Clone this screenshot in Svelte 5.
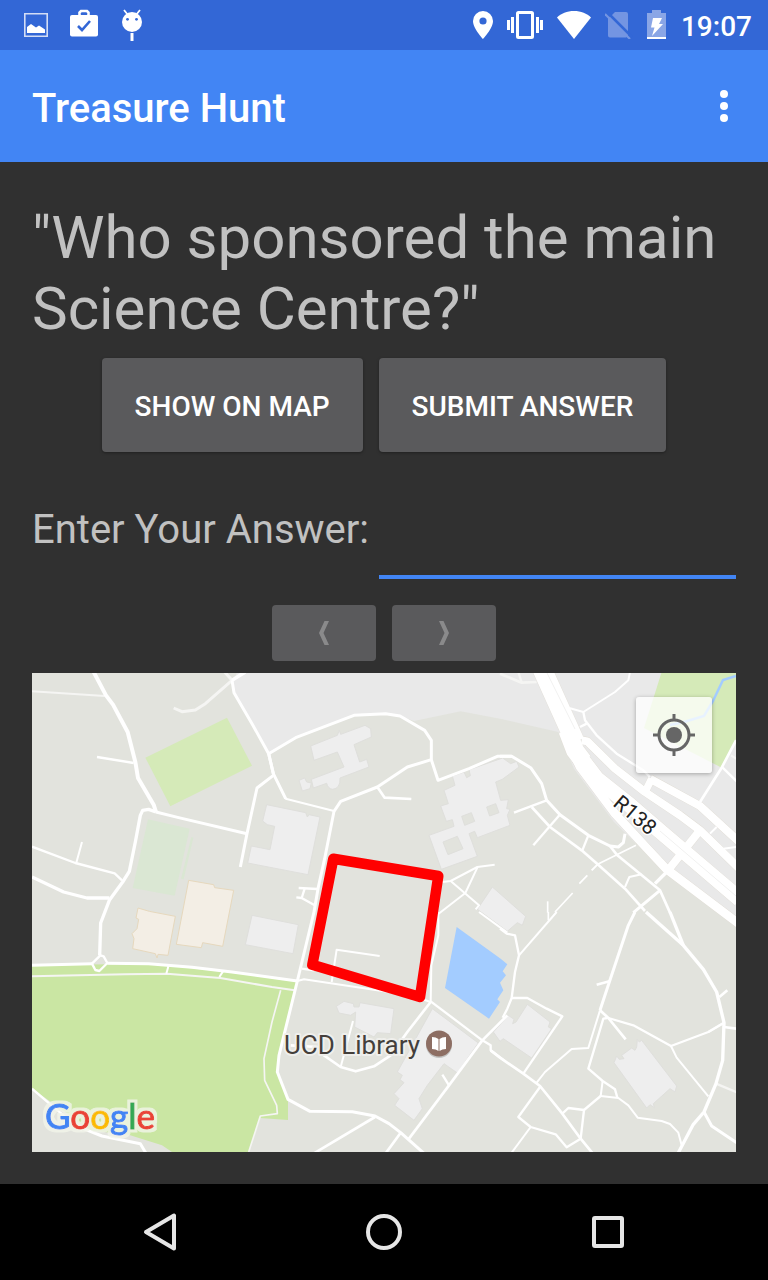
<script>
  let answer = $state('');

  // Map geometry is stored per tile, three units to the pixel.
  // Each tile has its origin in map pixels.
  const tiles = [
    {
      x: 0, y: -1,
      areas: [
        ['#d5eab8', '340,257 585,137 660,281 415,403'],
        ['#dae7d3', '348,442 473,470 428,671 302,648'],
        ['#dae7d3', '478,495 484,497 455,622 447,620']
      ],
      soft: [
        [6, '0,58 218,72'],
        [9, '425,108 450,119 490,114 520,95 600,25 635,0'],
        [9, '578,0 600,25']
      ],
      roads: [
        [10, '600,25 640,0'],
        [12, '185,0 222,70 243,98 287,180 310,270 318,318 365,398 372,420'],
        [7, '195,255 305,273'],
        [9, '600,25 606,62 660,155 710,245 724,305'],
        [9, '724,310 675,348 645,485 625,585'],
        [9, '372,420 440,437 645,485'],
        [10, '372,420 350,412 332,415 325,430 310,510 292,598 272,630 232,685 206,753 203,850'],
        [7, '0,524 130,573 248,604 270,625'],
        [6, '133,572 150,510'],
        [10, '0,615 95,660 165,678 232,678']
      ],
      tan: [], buildings: []
    },
    {
      x: 232, y: -1,
      areas: [
        ['#e9e9e9', '-80,0 -96,30 -86,65 -36,155 14,245 95,197 270,130 365,125 408,132 450,147 590,118 716,142 883,180 930,290 1050,450 1208,605 1416,750 1416,0']
      ],
      soft: [],
      roads: [
        [6, '28,305 65,380 210,417'],
        [9, '14,245 28,305 65,380'],
        [9, '14,245 95,197 270,130 365,125 408,132 482,175 502,205 502,263 522,325 615,290 700,253 743,253'],
        [9, '502,263 430,285 340,345 230,388 210,418 182,560 162,650 150,720'],
        [8, '340,345 362,377 442,381'],
        [7, '104,648 160,651'],
        [7, '122,650 113,678'],
        [7, '97,676 113,678 152,700'],
        [6, '535,630 560,627 640,585 692,578'],
        [6, '560,627 602,663 645,700 635,712'],
        [6, '640,587 604,663 520,728']
      ],
      tan: [],
      buildings: [
        'M140,222 220,190 226,175 230,187 303,160 320,170 322,195 270,218 287,270 308,262 315,285 228,318 Q230,350 205,352 Q192,350 188,334 L148,348 142,322 240,285 220,240 150,265Z',
        'M105,325 122,318 128,330 142,333 138,350 115,357Z',
        'M8,398 125,422 130,435 135,428 168,435 132,608 -49,573 -38,522 18,533 32,463 10,458 -4,447Z',
        'M565,312 600,300 608,317 619,311 615,293 716,258 740,275 758,268 765,285 715,322 695,330 710,385 733,383 728,410 738,412 730,430 738,460 640,497 632,478 615,485 640,553 532,592 495,490 570,463 565,443 547,448 530,402 553,395 540,355 573,340Z M593,433 622,422 632,448 602,460Z M668,405 695,395 705,422 677,432Z M537,510 580,493 597,530 552,548Z',
        'M685,645 785,733 775,760 760,752 730,778 640,712Z'
      ]
    },
    {
      x: 468, y: -1,
      areas: [['#d5eab8', '485,0 708,0 708,200 665,287 432,168']],
      soft: [
        [8, '0,5 65,32 110,30'],
        [7, '55,0 65,32'],
        [6, '693,250 712,262']
      ],
      roads: [
        [6, '390,0 385,25 345,60 250,120 205,107'],
        [7, '250,120 255,145 290,190 350,245 430,295 450,315'],
        [7, '240,165 260,155'],
        [8, '600,390 665,287 708,205'],
        [7, '668,287 710,328'],
        [6, '650,465 630,485'],
        [6, '670,530 708,525'],
        [9, '0,253 35,253 92,287 125,335 140,385 180,428 265,490 330,522 355,525 370,512 375,485'],
        [8, '95,405 150,465 245,535 293,577 375,650 435,717'],
        [7, '42,422 140,385'],
        [7, '178,430 100,520'],
        [7, '265,490 247,535'],
        [8, '330,522 352,550 420,605 480,655 510,722'],
        [5, '293,577 408,520'],
        [6, '275,595 293,577'],
        [5, '262,610 238,635'],
        [5, '218,663 165,720'],
        [5, '143,688 143,722'],
        [9, '480,655 400,722'],
        [6, '375,645 388,615 425,607'],
        [10, '465,635 500,600'],
        [58, '126,-10 205,165 225,210'],
        [54, '202,175 225,235 250,268'],
        [26, '212,225 240,285 345,425 430,517 500,592 720,758'],
        [46, '225,235 290,320 390,400 490,486 720,682'],
        [24, '245,205 262,208 345,290 435,360 540,430 600,475 720,592'],
        [24, '450,320 600,402 720,512'],
        [22, '455,320 435,360'],
        [24, '500,600 600,475']
      ],
      tan: [], buildings: []
    },
    {
      x: 0, y: 239,
      areas: [
        ['#cae6a3', '0,160 350,155 720,195 796,208 741,430 736,480 768,560 768,624 685,618 650,720 420,720 390,700 290,668 170,655 100,600 0,530']
      ],
      soft: [
        [6, '0,193 280,187 405,185 565,198 720,225 788,235'],
        [5, '746,235 720,330 696,440 698,505 734,580 736,605 685,612 650,720']
      ],
      roads: [
        [7, '205,130 215,133 226,153 202,177 190,174 180,155 205,130'],
        [9, '0,160 180,155'],
        [9, '226,154 350,155 480,166 600,180 796,207'],
        [6, '410,160 403,185'],
        [6, '573,178 562,195'],
        [7, '0,530 70,590 150,655'],
        [9, '130,640 210,672 325,695 342,724']
      ],
      tan: [
        'M470,-95 545,-82 548,-73 605,-65 572,103 512,92 508,107 433,97Z',
        'M318,-12 352,-2 430,13 408,130 378,127 375,138 370,125 302,110 306,80 300,65 315,50 320,22 312,18Z'
      ],
      buildings: ['M660,10 799,38 783,125 640,98Z']
    },
    {
      x: 232, y: 239,
      areas: [
        ['#a3ccff', '578,45 710,140 730,157 716,178 726,190 708,212 718,235 700,262 708,270 675,320 543,228']
      ],
      soft: [],
      roads: [
        [9, '150,0 100,207 45,430 40,480 72,562 138,598 265,599 333,612 375,635 410,662 480,724'],
        [6, '523,0 523,70 502,160 500,270'],
        [7, '500,268 655,385 680,400 680,415 720,445'],
        [6, '645,0 730,62'],
        [8, '500,270 430,360 380,430 330,463 275,478 230,465 180,430 160,405 80,400'],
        [6, '267,327 230,465'],
        [6, '100,207 120,202 440,250 500,270'],
        [7, '113,170 150,175'],
        [6, '203,210 218,113 347,132'],
        [8, '730,310 655,385 555,520 435,680'],
        [7, '535,488 555,520'],
        [8, '410,662 365,724'],
        [8, '150,724 333,615']
      ],
      tan: [],
      buildings: [
        'M217,283 240,268 268,275 270,285 285,285 288,272 390,290 380,365 340,362 330,375 272,345 275,300 260,310 225,303Z',
        'M505,290 643,393 580,483 540,455 490,520 465,560 475,590 450,625 392,580 405,560 390,545 420,512 408,503 415,490 400,480Z'
      ]
    },
    {
      x: 468, y: 239,
      areas: [],
      soft: [
        [7, '625,360 672,332'],
        [7, '648,515 712,542']
      ],
      roads: [
        [7, '8,317 22,290 35,258 45,180 57,130 45,70 20,65 0,50'],
        [7, '35,258 82,258 140,290 187,313 70,485'],
        [6, '57,130 170,0'],
        [5, '145,0 145,25'],
        [8, '-28,415 0,437 70,485 120,522 187,605 242,680 278,724'],
        [6, '110,512 135,480 215,411 265,408 300,295'],
        [9, '405,0 385,40 328,210 300,295'],
        [8, '290,218 328,208'],
        [8, '300,295 325,318 377,382'],
        [7, '325,318 400,340 513,402 625,360 672,332'],
        [7, '322,318 310,320 265,470 308,507 345,532 352,557'],
        [6, '513,402 530,437 625,553'],
        [6, '308,507 302,552 355,558 385,580 413,617 485,627 510,636 535,662 545,700'],
        [7, '302,552 252,594 242,680 200,706 167,667 92,645 55,615 120,525'],
        [7, '187,605 205,588 252,594'],
        [6, '92,645 35,722'],
        [10, '438,0 550,100 610,172 650,240 672,332 668,445 648,515 612,600 580,637 535,722'],
        [10, '510,0 550,100'],
        [8, '658,255 682,235'],
        [8, '672,345 710,350'],
        [9, '612,600 635,642 710,692']
      ],
      tan: [],
      buildings: [
        'M82,277 150,330 145,345 155,350 95,438 10,380 0,388 -20,360 25,310 42,322 38,335 48,330Z',
        'M425,385 530,522 525,540 510,530 460,575 463,587 450,578 440,588 342,452 350,432 358,442 372,440 365,430 395,408 405,415 410,405 412,382 418,390Z'
      ]
    }
  ];

  const logo = [
    ['G', '#4285f4'],
    ['o', '#ea4335'],
    ['o', '#fbbc05'],
    ['g', '#4285f4'],
    ['l', '#34a853'],
    ['e', '#ea4335']
  ];

  const place = (t) => `translate(${t.x} ${t.y}) scale(${1 / 3})`;
</script>

<div class="screen">
  <div class="status">
    <div class="notices">
      <svg width="24" height="24" viewBox="0 0 24 24"><path d="M.8.8h22.4v22.4H.8z" fill="none" stroke="#d3ddf5" stroke-width="1.6" /><path d="M3 14l4-3 5 3.500 3-2 6 4V20H3z" fill="#fff" /></svg>
      <svg width="28" height="32" viewBox="0 0 28 32"><path d="M9.500 7V3.500L11 2h6l1.500 1.500V7" fill="none" stroke="#fff" stroke-width="2.600" /><rect y="6" width="28" height="21.500" rx="2" fill="#fff" /><path d="M8 17l4 4 8-9" fill="none" stroke="#3367d6" stroke-width="2.600" /></svg>
      <svg width="24" height="32" viewBox="0 0 24 32"><circle cx="12" cy="13" r="10" fill="#fff" /><path d="M4 1l4 5M20 1l-4 5" stroke="#fff" stroke-width="1.800" /><circle cx="7.500" cy="10.300" r="1.400" fill="#3367d6" /><circle cx="16.500" cy="10.300" r="1.400" fill="#3367d6" /><path d="M12 24v8" stroke="#fff" stroke-width="3" /></svg>
    </div>
    <div class="system">
      <svg width="20" height="28" viewBox="0 0 20 28"><path fill="#fff" fill-rule="evenodd" d="M10 0a10 10 0 0 0-10 10c0 7.500 10 18 10 18s10-10.500 10-18A10 10 0 0 0 10 0zm0 6.400a3.600 3.600 0 1 1 0 7.200 3.600 3.600 0 0 1 0-7.200z" /></svg>
      <svg width="36" height="28" viewBox="1 0 36 28"><rect x="11.500" y="1.500" width="15" height="25" rx="1" fill="none" stroke="#fff" stroke-width="3" /><path d="M6.500 6v16M31.500 6v16M2.500 9v10M35.500 9v10" stroke="#fff" stroke-width="3" /></svg>
      <svg width="34" height="28" viewBox="0 0 34 28"><path fill="#fff" d="M17 28L0 6.500C4 2.500 10 0 17 0s13 2.500 17 6.500z" /></svg>
      <svg width="28" height="28" viewBox="0 0 28 28"><path fill="#7495e2" d="M7 4l3-3h11q2 0 2 2v22l-2 1.500H5q-2 0-2-2V7z" /><path d="M2 1l25 25" stroke="#3367d6" stroke-width="2.500" /><path d="M0 3l25 25" stroke="#7495e2" stroke-width="2.200" /></svg>
      <svg width="20" height="30" viewBox="0 0 20 30"><path fill="#8aa6e6" d="M5 0h9v3h5v24H0V3h5z" /><path fill="#fff" d="M0 27h19v2H0zM6 8h9l-3 6h4L5 26l2.500-8.500H4z" /></svg>
      <time>19:07</time>
    </div>
  </div>

  <header>
    <h1>Treasure Hunt</h1>
    <button class="more" aria-label="More options">
      <svg width="8" height="32" viewBox="0 0 8 32" fill="#fff"><circle cx="4" cy="4" r="4" /><circle cx="4" cy="16" r="4" /><circle cx="4" cy="28" r="4" /></svg>
    </button>
  </header>

  <main>
    <p class="question">"Who sponsored the main Science Centre?"</p>
    <div class="actions">
      <button class="action">SHOW ON MAP</button>
      <button class="action">SUBMIT ANSWER</button>
    </div>
    <div class="answer">
      <label for="answer">Enter Your Answer:</label>
      <input id="answer" type="text" bind:value={answer} />
    </div>
    <div class="pager">
      <button disabled aria-label="Previous question">
        <svg width="10" height="24" viewBox="0 0 10 24"><path fill="#8a8a8b" d="M5.500 0H10L4.500 12 10 24H5.500L0 12z" /></svg>
      </button>
      <button disabled aria-label="Next question">
        <svg width="10" height="24" viewBox="0 0 10 24"><path fill="#8a8a8b" d="M4.500 0H0l5.500 12L0 24h4.500L10 12z" /></svg>
      </button>
    </div>

    <div class="map">
      <svg class="canvas" viewBox="0 0 704 479">
        <defs>
          <filter id="halo" x="-10%" y="-20%" width="120%" height="140%">
            <feMorphology in="SourceAlpha" operator="dilate" radius="3" result="wide" />
            <feGaussianBlur in="wide" stdDeviation="0.7" result="soft" />
            <feFlood flood-color="#f2f5ea" flood-opacity="0.8" />
            <feComposite in2="soft" operator="in" result="glow" />
            <feMerge><feMergeNode in="glow" /><feMergeNode in="SourceGraphic" /></feMerge>
          </filter>
        </defs>
        <rect width="704" height="479" fill="#e2e3dd" />
        {#each tiles as t}
          <g transform={place(t)}>
            {#each t.areas as [fill, points]}<polygon {points} {fill} />{/each}
          </g>
        {/each}
        <path d="M638 52l14-3 20-6 9-15 10-21 13-4" fill="none" stroke="#a3ccff" stroke-width="2.500" />
        {#each tiles as t}
          <g transform={place(t)}>
            {#each t.tan as d}<path {d} fill="#f3eee5" stroke="#e6d8bd" stroke-width="3" />{/each}
            {#each t.buildings as d}<path {d} fill="#eeeeee" fill-rule="evenodd" stroke="#dfdfdc" stroke-width="3" />{/each}
          </g>
        {/each}
        {#each tiles as t}
          <g transform={place(t)} fill="none" stroke-linejoin="round">
            {#each t.soft as [w, points]}<polyline {points} stroke="#f5f5f3" stroke-width={w} />{/each}
            {#each t.roads as [w, points]}
              {#if w > 20}<polyline {points} stroke="#e0dcd4" stroke-width={w + 2} />{/if}
            {/each}
            {#each t.roads as [w, points]}<polyline {points} stroke="#fff" stroke-width={w} />{/each}
          </g>
        {/each}
        <path d="M515 0l28 56M628 158l76 65" fill="none" stroke="#f1f1f0" />
        <polygon points="301.300,185.700 406.300,203 388,324 280.300,291.700" fill="none" stroke="#f00" stroke-width="10.500" stroke-linejoin="round" />
        <text class="road" transform="translate(580 132) rotate(40)">R138</text>
        <text class="place" x="252" y="381">UCD Library</text>
        <circle cx="407" cy="372" r="13" fill="#6f6f6c" opacity=".35" />
        <circle cx="407" cy="370.500" r="13" fill="#8d6e63" />
        <path d="M400 364q4 0 6.500 2v12q-2.500-2-6.500-2zM414 364q-4 0-6.500 2v12q2.500-2 6.500-2z" fill="#fff" />
        <text class="logo" x="13" y="456" filter="url(#halo)">{#each logo as [letter, color]}<tspan fill={color} stroke={color}>{letter}</tspan>{/each}</text>
      </svg>
      <button class="locate" aria-label="My location">
        <svg width="42" height="42" viewBox="0 0 42 42"><g fill="none" stroke="#666" stroke-width="3"><circle cx="21" cy="21" r="15" /><path d="M21 0v6M21 36v6M0 21h6M36 21h6" /></g><circle cx="21" cy="21" r="8" fill="#666" /></svg>
      </button>
    </div>
  </main>

  <nav>
    <button aria-label="Back"><svg width="34" height="40" viewBox="0 0 34 40"><path d="M31 3.500v33L3 20z" /></svg></button>
    <button aria-label="Home"><svg width="36" height="36" viewBox="0 0 36 36"><circle cx="18" cy="18" r="16" /></svg></button>
    <button aria-label="Recent apps"><svg width="32" height="32" viewBox="0 0 32 32"><rect x="2" y="2" width="28" height="28" rx="1" /></svg></button>
  </nav>
</div>

<style>
  :global(body) {
    margin: 0;
    background: #303030;
  }
  .screen {
    display: flex;
    flex-direction: column;
    min-height: 100vh;
    font-family: Roboto, sans-serif;
    color: #c1c1c1;
    background: #303030;
  }
  svg {
    display: block;
    flex: none;
  }
  button {
    display: flex;
    align-items: center;
    justify-content: center;
    border: 0;
    padding: 0;
    background: none;
    font: inherit;
    color: #fff;
  }
  .status {
    display: flex;
    justify-content: space-between;
    height: 50px;
    padding: 0 16px 0 24px;
    background: #3367d6;
  }
  .notices,
  .system {
    display: flex;
    align-items: center;
  }
  .notices {
    gap: 22px;
  }
  .system {
    gap: 14px;
  }
  time {
    padding-top: 4px;
    font-size: 28px;
    line-height: 32px;
    font-weight: 500;
    color: #fff;
  }
  header {
    display: flex;
    align-items: center;
    justify-content: space-between;
    height: 112px;
    padding: 0 24px 0 32px;
    background: #4285f4;
  }
  h1 {
    margin: 0;
    padding-top: 6px;
    font-size: 40px;
    line-height: 48px;
    font-weight: 500;
    color: #fff;
  }
  .more {
    width: 40px;
    height: 48px;
  }
  main {
    flex: 1;
    padding: 40px 32px 32px;
  }
  .question {
    margin: 0;
    font-size: 60px;
    line-height: 71px;
  }
  .actions,
  .pager {
    display: flex;
    justify-content: center;
    gap: 16px;
  }
  .actions {
    margin-top: 14px;
  }
  .action {
    height: 94px;
    padding: 2px 33px 0;
    border-radius: 4px;
    background: #5a5a5c;
    box-shadow: 0 1px 3px rgba(0, 0, 0, 0.35);
    font-size: 28px;
    font-weight: 500;
  }
  .answer {
    display: flex;
    align-items: flex-start;
    gap: 10px;
    margin-top: 54px;
  }
  label {
    font-size: 40px;
    line-height: 48px;
  }
  input {
    flex: 1;
    min-width: 0;
    height: 73px;
    box-sizing: border-box;
    border: 0;
    border-bottom: 4px solid #4285f4;
    padding: 0;
    background: none;
    outline: 0;
    font: inherit;
    font-size: 36px;
    color: #fff;
  }
  .pager {
    margin-top: 26px;
  }
  .pager button {
    width: 104px;
    height: 56px;
    border-radius: 4px;
    background: #5a5a5c;
  }
  .map {
    position: relative;
    margin-top: 12px;
  }
  .canvas {
    width: 100%;
    height: auto;
  }
  .road {
    font-size: 21px;
    fill: #222;
    stroke: #fff;
    stroke-width: 3px;
    paint-order: stroke;
  }
  .place {
    font-size: 26px;
    fill: #443f3b;
    stroke: #efefec;
    stroke-width: 4px;
    stroke-linejoin: round;
    paint-order: stroke;
  }
  .logo {
    font-family: Lato, sans-serif;
    font-size: 35px;
    stroke-width: 1px;
  }
  .locate {
    position: absolute;
    top: 24px;
    right: 24px;
    width: 76px;
    height: 76px;
    border-radius: 3px;
    background: rgba(255, 255, 255, 0.75);
    box-shadow: 0 1px 4px rgba(0, 0, 0, 0.3);
  }
  nav {
    display: flex;
    justify-content: center;
    height: 96px;
    background: #000;
  }
  nav button {
    flex: 0 1 224px;
  }
  nav svg {
    fill: none;
    stroke: #e6e6e6;
    stroke-width: 4px;
    stroke-linejoin: round;
  }
</style>
